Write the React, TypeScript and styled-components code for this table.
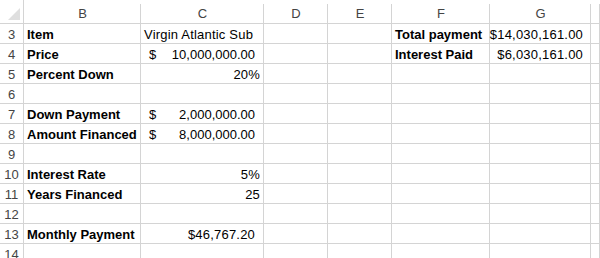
import React from "react";
import styled, { createGlobalStyle } from "styled-components";

const GridColor = "#d4d4d4";
const HeaderTextColor = "#444444";

const GlobalStyle = createGlobalStyle`
  html, body {
    margin: 0;
    padding: 0;
    background: #ffffff;
    overflow: hidden;
  }
  body {
    font-family: "Liberation Sans", Arial, sans-serif;
    font-size: 13px;
    color: #000000;
  }
`;

const Sheet = styled.div`
  display: grid;
  grid-template-columns: 24px 117px 123px 64px 64px 98px 101px 1fr;
  grid-auto-rows: 20px;
  grid-template-rows: 24px;
  width: 600px;
  height: 258px;
  overflow: hidden;
`;

const Corner = styled.div`
  position: relative;
  border-right: 1px solid ${GridColor};
  border-bottom: 1px solid ${GridColor};
  box-sizing: border-box;

  &::after {
    content: "";
    position: absolute;
    right: 3px;
    bottom: 3px;
    width: 0;
    height: 0;
    border-left: 12px solid transparent;
    border-bottom: 12px solid #dfdfdf;
  }
`;

const ColHeader = styled.div`
  display: flex;
  align-items: center;
  justify-content: center;
  padding-top: 3px;
  box-sizing: border-box;
  color: ${HeaderTextColor};
  border-bottom: 1px solid ${GridColor};
  background: linear-gradient(
    to right,
    transparent calc(100% - 1px),
    ${GridColor} calc(100% - 1px)
  );
  background-size: 100% calc(100% - 4px);
  background-position: 0 4px;
  background-repeat: no-repeat;
`;

const RowHeader = styled.div`
  display: flex;
  align-items: flex-end;
  justify-content: center;
  padding-bottom: 1px;
  box-sizing: border-box;
  color: ${HeaderTextColor};
  border-right: 1px solid ${GridColor};
  border-bottom: 1px solid ${GridColor};
`;

const Cell = styled.div<{ $align?: "left" | "right"; $bold?: boolean; $padRight?: number }>`
  display: flex;
  align-items: flex-end;
  justify-content: ${(p) => (p.$align === "right" ? "flex-end" : "flex-start")};
  padding: 0 ${(p) => p.$padRight ?? 3}px 1px 3px;
  box-sizing: border-box;
  white-space: nowrap;
  overflow: visible;
  font-weight: ${(p) => (p.$bold ? 700 : 400)};
  letter-spacing: ${(p) => (p.$bold ? "0" : "0.2px")};
  border-right: 1px solid ${GridColor};
  border-bottom: 1px solid ${GridColor};
`;

const Accounting = styled(Cell)`
  justify-content: space-between;
  padding-left: 8px;
  padding-right: 8px;
  letter-spacing: 0;
`;

type CellData =
  | { text: string; align?: "left" | "right"; bold?: boolean; padRight?: number }
  | { dollar: string };

type RowData = { n: number; cells: (CellData | null)[] };

const rows: RowData[] = [
  {
    n: 3,
    cells: [
      { text: "Item", bold: true },
      { text: "Virgin Atlantic Sub" },
      null,
      null,
      { text: "Total payment", bold: true },
      { text: "$14,030,161.00", align: "right", padRight: 7 },
    ],
  },
  {
    n: 4,
    cells: [
      { text: "Price", bold: true },
      { dollar: "10,000,000.00" },
      null,
      null,
      { text: "Interest Paid", bold: true },
      { text: "$6,030,161.00", align: "right", padRight: 7 },
    ],
  },
  { n: 5, cells: [{ text: "Percent Down", bold: true }, { text: "20%", align: "right" }] },
  { n: 6, cells: [] },
  { n: 7, cells: [{ text: "Down Payment", bold: true }, { dollar: "2,000,000.00" }] },
  { n: 8, cells: [{ text: "Amount Financed", bold: true }, { dollar: "8,000,000.00" }] },
  { n: 9, cells: [] },
  { n: 10, cells: [{ text: "Interest Rate", bold: true }, { text: "5%", align: "right" }] },
  { n: 11, cells: [{ text: "Years Financed", bold: true }, { text: "25", align: "right" }] },
  { n: 12, cells: [] },
  {
    n: 13,
    cells: [
      { text: "Monthly Payment", bold: true },
      { text: "$46,767.20", align: "right", padRight: 8 },
    ],
  },
  { n: 14, cells: [] },
];

const columns = ["B", "C", "D", "E", "F", "G", ""];

const renderCell = (cell: CellData | null | undefined, key: string) => {
  if (!cell) return <Cell key={key} />;
  if ("dollar" in cell) {
    return (
      <Accounting key={key}>
        <span>$</span>
        <span>{cell.dollar}</span>
      </Accounting>
    );
  }
  return (
    <Cell key={key} $align={cell.align} $bold={cell.bold} $padRight={cell.padRight}>
      {cell.text}
    </Cell>
  );
};

const App = () => {
  return (
    <>
      <GlobalStyle />
      <Sheet>
        <Corner />
        {columns.map((c, i) => (
          <ColHeader key={i}>{c}</ColHeader>
        ))}
        {rows.map((row) => (
          <React.Fragment key={row.n}>
            <RowHeader>{row.n}</RowHeader>
            {columns.map((_, i) => renderCell(row.cells[i], `${row.n}-${i}`))}
          </React.Fragment>
        ))}
      </Sheet>
    </>
  );
};

export default App;
